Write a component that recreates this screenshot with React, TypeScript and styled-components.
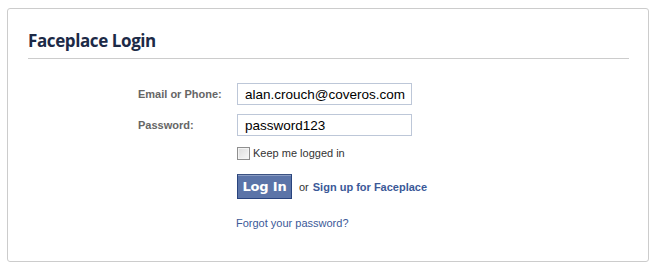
import React from "react";
import styled, { createGlobalStyle } from "styled-components";

const GlobalStyle = createGlobalStyle`
  html, body { margin: 0; padding: 0; background: #ffffff; }
  body { font-family: "Liberation Sans", Arial, sans-serif; }
`;

const Page = styled.div`
  padding: 8px 0 0 7px;
`;

const Card = styled.div`
  box-sizing: border-box;
  width: 642px;
  height: 254px;
  border: 1px solid #cccccc;
  border-radius: 3px;
  padding: 0 19px 0 20px;
`;

const Title = styled.h2`
  margin: 0;
  padding: 22px 0 7px;
  font-family: "Open Sans", "Liberation Sans", sans-serif;
  font-size: 17px;
  line-height: 20px;
  font-weight: 700;
  color: #1c2a47;
  border-bottom: 1px solid #cccccc;
  letter-spacing: -0.4px;
`;

const Form = styled.form`
  display: grid;
  grid-template-columns: 99px 1fr;
  margin: 24px 0 0 110px;
`;

const Label = styled.label`
  font-size: 11px;
  font-weight: 700;
  color: #666666;
  display: flex;
  align-items: center;
  height: 22px;
`;

const Field = styled.input`
  box-sizing: border-box;
  width: 175px;
  height: 22px;
  margin: 0 0 9px 0;
  border: 1px solid #bdc7d8;
  padding: 0 0 0 7px;
  font-family: "Liberation Sans", Arial, sans-serif;
  font-size: 13.5px;
  color: #000000;
  outline: none;
  background: #fff;
`;

const Spacer = styled.div``;

const CheckRow = styled.div`
  display: flex;
  align-items: center;
  gap: 3px;
  margin-top: 1px;
  font-size: 11px;
  color: #333333;
  height: 14px;
`;

const Box = styled.span`
  box-sizing: border-box;
  width: 13px;
  height: 13px;
  border: 1px solid #8f8f8f;
  background: linear-gradient(135deg, #dcdcdc, #f8f8f8);
  box-shadow: inset 0 0 0 1px #f4f4f4;
`;

const ActionRow = styled.div`
  display: flex;
  align-items: center;
  margin-top: 14px;
  font-size: 11px;
  color: #333333;
  white-space: nowrap;
`;

const LoginButton = styled.button`
  flex-shrink: 0;
  box-sizing: border-box;
  width: 55px;
  height: 25px;
  padding: 0;
  border: 1px solid #29447e;
  border-top-color: #3b5282;
  background: #5b74a8;
  box-shadow: inset 0 1px 0 #8a9cc2;
  color: #ffffff;
  font-family: "DejaVu Sans", Tahoma, sans-serif;
  font-weight: 700;
  font-size: 13px;
  letter-spacing: -0.2px;
  margin-right: 7px;
`;

const Strong = styled.a`
  color: #3b5998;
  font-weight: 700;
  text-decoration: none;
  margin-left: 4px;
`;

const Forgot = styled.a`
  display: block;
  margin-top: 18px;
  margin-left: -1px;
  font-size: 11px;
  color: #3b5998;
  text-decoration: none;
`;

export default function App() {
  return (
    <>
      <GlobalStyle />
      <Page>
        <Card>
          <Title>Faceplace Login</Title>
          <Form onSubmit={(e) => e.preventDefault()}>
            <Label htmlFor="email">Email or Phone:</Label>
            <Field id="email" defaultValue="alan.crouch@coveros.com" />
            <Label htmlFor="pass">Password:</Label>
            <Field id="pass" defaultValue="password123" />
            <Spacer />
            <div>
              <CheckRow>
                <Box />
                <span>Keep me logged in</span>
              </CheckRow>
              <ActionRow>
                <LoginButton type="submit">Log In</LoginButton>
                <span>or</span>
                <Strong href="#">Sign up for Faceplace</Strong>
              </ActionRow>
              <Forgot href="#">Forgot your password?</Forgot>
            </div>
          </Form>
        </Card>
      </Page>
    </>
  );
}
